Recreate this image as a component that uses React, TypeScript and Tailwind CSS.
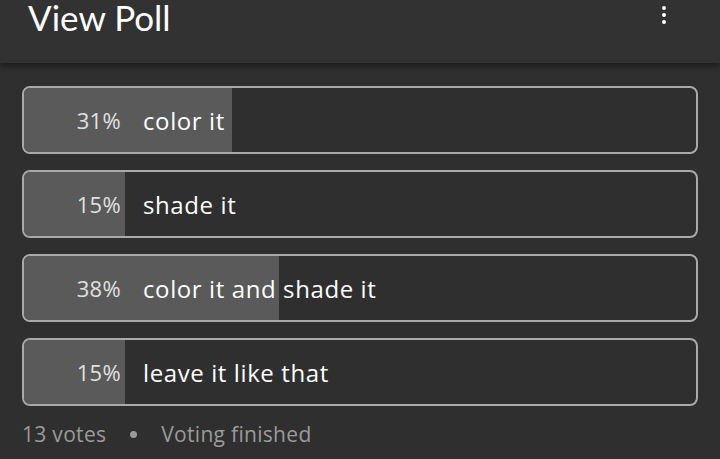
const options = [
  { pct: 31, label: "color it" },
  { pct: 15, label: "shade it" },
  { pct: 38, label: "color it and shade it" },
  { pct: 15, label: "leave it like that" },
];

export default function App() {
  return (
    <div
      className="w-[720px] h-[459px] overflow-hidden bg-[#2f2f2f] text-white"
      style={{ fontFamily: "'Open Sans', 'Noto Sans', sans-serif" }}
    >
      <div className="relative h-[63px] bg-[#323232] shadow-[0_3px_6px_rgba(0,0,0,0.45)] flex items-start justify-between pl-[28px] pr-[54px]">
        <h1
          className="text-[35px] leading-none mt-[0px] font-normal"
          style={{ fontFamily: "Lato, sans-serif" }}
        >
          View Poll
        </h1>
        <div className="flex flex-col gap-[3px] pt-[6px]">
          <span className="w-[4px] h-[4px] rounded-full bg-white" />
          <span className="w-[4px] h-[4px] rounded-full bg-white" />
          <span className="w-[4px] h-[4px] rounded-full bg-white" />
        </div>
      </div>
      <div className="px-[22px] pt-[23px] flex flex-col gap-[16px]">
        {options.map((o, i) => (
          <div
            key={i}
            className="relative h-[68px] rounded-[8px] border-2 border-[#a9a9a9] overflow-hidden bg-[#2f2f2f]"
          >
            <div
              className="absolute left-0 top-0 bottom-0 bg-[#5a5a5a]"
              style={{ width: `${o.pct}%` }}
            />
            <div className="relative h-full flex items-center pt-[1px]">
              <span className="w-[97px] text-right text-[22px] tracking-[0.3px] text-[#e0e0e0]">{o.pct}%</span>
              <span className="ml-[22px] text-[24px] tracking-[0.6px] text-white">{o.label}</span>
            </div>
          </div>
        ))}
      </div>
      <div className="px-[22px] mt-[13px] flex items-center text-[21px] tracking-[0.3px] text-[#9a9a9a]">
        <span>13 votes</span>
        <span className="w-[7px] h-[7px] rounded-full bg-[#9a9a9a] ml-[24px] mr-[24px]" />
        <span>Voting finished</span>
      </div>
    </div>
  );
}
